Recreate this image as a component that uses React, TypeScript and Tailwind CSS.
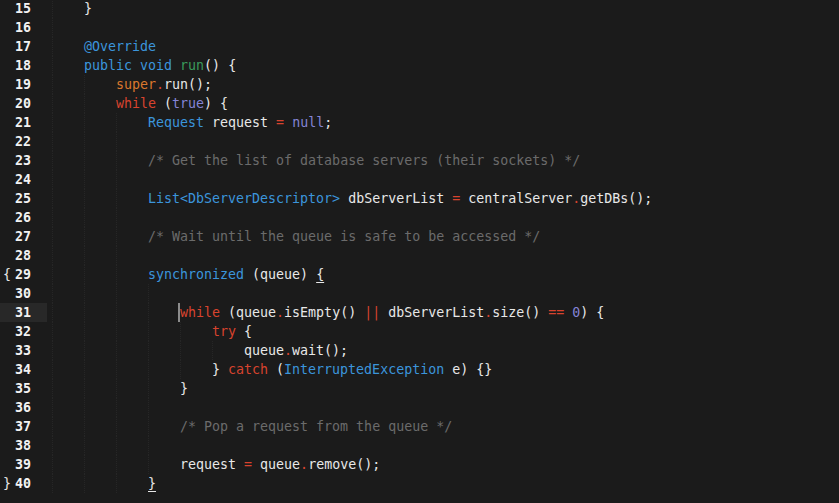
import React from 'react';

type Tok = [string, string?];

type Line = {
  no: number;
  indent: number;
  toks: Tok[];
  fold?: string;
  active?: boolean;
  cursor?: boolean;
};

const C = {
  text: 'text-[#e8e8e8]',
  kw: 'text-[#3b95db]',
  red: 'text-[#d8432e]',
  sup: 'text-[#d9772d]',
  lit: 'text-[#8584d6]',
  fn: 'text-[#3a9a5b]',
  cm: 'text-[#6b6b6b]',
};

const lines: Line[] = [
  { no: 15, indent: 1, toks: [['}']] },
  { no: 16, indent: 1, toks: [] },
  { no: 17, indent: 1, toks: [['@Override', C.kw]] },
  { no: 18, indent: 1, toks: [['public void', C.kw], [' '], ['run', C.fn], ['() {']] },
  { no: 19, indent: 2, toks: [['super', C.sup], ['.', C.red], ['run();']] },
  { no: 20, indent: 2, toks: [['while', C.red], [' ('], ['true', C.lit], [') {']] },
  { no: 21, indent: 3, toks: [['Request', C.kw], [' request '], ['=', C.red], [' '], ['null', C.lit], [';']] },
  { no: 22, indent: 3, toks: [] },
  { no: 23, indent: 3, toks: [['/* Get the list of database servers (their sockets) */', C.cm]] },
  { no: 24, indent: 3, toks: [] },
  {
    no: 25,
    indent: 3,
    toks: [
      ['List<DbServerDescriptor>', C.kw],
      [' dbServerList '],
      ['=', C.red],
      [' centralServer'],
      ['.', C.red],
      ['getDBs();'],
    ],
  },
  { no: 26, indent: 3, toks: [] },
  { no: 27, indent: 3, toks: [['/* Wait until the queue is safe to be accessed */', C.cm]] },
  { no: 28, indent: 3, toks: [] },
  { no: 29, indent: 3, fold: '{', toks: [['synchronized', C.kw], [' (queue) '], ['{', 'u']] },
  { no: 30, indent: 4, toks: [] },
  {
    no: 31,
    indent: 4,
    active: true,
    cursor: true,
    toks: [
      ['while', C.red],
      [' (queue'],
      ['.', C.red],
      ['isEmpty() '],
      ['||', C.red],
      [' dbServerList'],
      ['.', C.red],
      ['size() '],
      ['==', C.red],
      [' '],
      ['0', C.lit],
      [') {'],
    ],
  },
  { no: 32, indent: 5, toks: [['try', C.red], [' {']] },
  { no: 33, indent: 6, toks: [['queue'], ['.', C.red], ['wait();']] },
  {
    no: 34,
    indent: 5,
    toks: [['} '], ['catch', C.red], [' ('], ['InterruptedException', C.kw], [' e) {}']],
  },
  { no: 35, indent: 4, toks: [['}']] },
  { no: 36, indent: 4, toks: [] },
  { no: 37, indent: 4, toks: [['/* Pop a request from the queue */', C.cm]] },
  { no: 38, indent: 4, toks: [] },
  { no: 39, indent: 4, toks: [['request '], ['=', C.red], [' queue'], ['.', C.red], ['remove();']] },
  { no: 40, indent: 3, fold: '}', toks: [['}', 'u']] },
];

function CodeLine({ line }: { line: Line }) {
  return (
    <div className="flex h-[19px] items-center">
      <div
        className={`relative flex h-full w-[47px] shrink-0 items-center justify-end pr-[16px] font-bold text-[#f2f2f2] ${
          line.active ? 'bg-[#282828]' : ''
        }`}
      >
        {line.fold && (
          <span className="absolute left-[3px] top-0 font-normal text-[#e8e8e8]">{line.fold}</span>
        )}
        {line.no}
      </div>
      <div className="flex h-full pl-[5px]">
        {Array.from({ length: line.indent }).map((_, i) => (
          <span key={i} className="h-full w-[32px] shrink-0 border-l border-dotted border-[#262626]" />
        ))}
        <span className="relative whitespace-pre text-[#e8e8e8]">
          {line.cursor && (
            <span className="absolute left-[-2px] top-0 h-[19px] w-[2px] bg-[#8c8c8c]" />
          )}
          {line.toks.map(([t, c], i) =>
            c === 'u' ? (
              <span key={i} className="underline decoration-[#e8e8e8] underline-offset-[3px]">
                {t}
              </span>
            ) : (
              <span key={i} className={c ?? ''}>
                {t}
              </span>
            )
          )}
        </span>
      </div>
    </div>
  );
}

export default function App() {
  return (
    <div
      className="h-[503px] w-[839px] overflow-hidden bg-[#1b1b1b] text-[13.3px] leading-[19px]"
      style={{ fontFamily: '"DejaVu Sans Mono", "Liberation Mono", monospace' }}
    >
      <div className="-mt-px">
        {lines.map((l) => (
          <CodeLine key={l.no} line={l} />
        ))}
      </div>
    </div>
  );
}
